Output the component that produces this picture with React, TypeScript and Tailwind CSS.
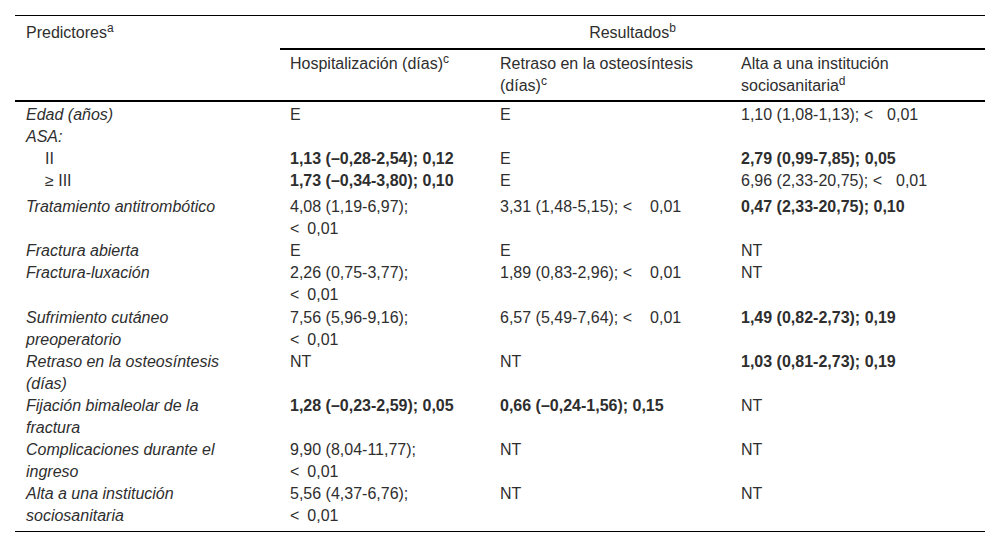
import type { ReactNode } from "react";

function Lt({ gap }: { gap: "c2" | "c3" | "c4" }) {
  const w = gap === "c2" ? "w-[8px]" : gap === "c3" ? "w-[18px]" : "w-[14px]";
  return (
    <>
      {"<"}
      <span className={`inline-block ${w}`} />
      0,01
    </>
  );
}

const B = ({ children }: { children: ReactNode }) => <span className="font-bold">{children}</span>;

type Row = { label: ReactNode; c2: ReactNode; c3: ReactNode; c4: ReactNode; pad?: string };

const rows: Row[] = [
  { label: "Edad (años)", c2: "E", c3: "E", c4: <>1,10 (1,08-1,13); <Lt gap="c4" /></>, pad: "pt-[2px]" },
  { label: "ASA:", c2: "", c3: "", c4: "" },
  {
    label: <span className="not-italic pl-[19px]">II</span>,
    c2: <B>1,13 (–0,28-2,54); 0,12</B>,
    c3: "E",
    c4: <B>2,79 (0,99-7,85); 0,05</B>,
  },
  {
    label: <span className="not-italic pl-[19px]">≥ III</span>,
    c2: <B>1,73 (–0,34-3,80); 0,10</B>,
    c3: "E",
    c4: <>6,96 (2,33-20,75); <Lt gap="c4" /></>,
  },
  {
    label: "Tratamiento antitrombótico",
    c2: <>4,08 (1,19-6,97);<br /><Lt gap="c2" /></>,
    c3: <>3,31 (1,48-5,15); <Lt gap="c3" /></>,
    c4: <B>0,47 (2,33-20,75); 0,10</B>,
    pad: "pt-[4px]",
  },
  { label: "Fractura abierta", c2: "E", c3: "E", c4: "NT" },
  {
    label: "Fractura-luxación",
    c2: <>2,26 (0,75-3,77);<br /><Lt gap="c2" /></>,
    c3: <>1,89 (0,83-2,96); <Lt gap="c3" /></>,
    c4: "NT",
  },
  {
    label: <>Sufrimiento cutáneo<br />preoperatorio</>,
    c2: <>7,56 (5,96-9,16);<br /><Lt gap="c2" /></>,
    c3: <>6,57 (5,49-7,64); <Lt gap="c3" /></>,
    c4: <B>1,49 (0,82-2,73); 0,19</B>,
    pad: "pt-[1px]",
  },
  {
    label: <>Retraso en la osteosíntesis<br />(días)</>,
    c2: "NT",
    c3: "NT",
    c4: <B>1,03 (0,81-2,73); 0,19</B>,
  },
  {
    label: <>Fijación bimaleolar de la<br />fractura</>,
    c2: <B>1,28 (–0,23-2,59); 0,05</B>,
    c3: <B>0,66 (–0,24-1,56); 0,15</B>,
    c4: "NT",
  },
  {
    label: <>Complicaciones durante el<br />ingreso</>,
    c2: <>9,90 (8,04-11,77);<br /><Lt gap="c2" /></>,
    c3: "NT",
    c4: "NT",
  },
  {
    label: <>Alta a una institución<br />sociosanitaria</>,
    c2: <>5,56 (4,37-6,76);<br /><Lt gap="c2" /></>,
    c3: "NT",
    c4: "NT",
    pad: "pb-[4px]",
  },
];

export default function App() {
  return (
    <div className="w-[1000px] h-[547px] bg-white pt-[15px] pl-[15px] font-[family-name:Liberation_Sans,Arial,sans-serif] text-[16px] text-[#2e2e2e]">
      <table className="w-[970px] table-fixed border-separate border-spacing-0 border-t border-b border-black leading-[22px]">
        <colgroup>
          <col className="w-[265px]" />
          <col className="w-[210px]" />
          <col className="w-[241px]" />
          <col className="w-[254px]" />
        </colgroup>
        <thead>
          <tr>
            <th
              rowSpan={2}
              className="align-top text-left font-normal pl-[11px] pt-[6px] border-b-2 border-black"
            >
              Predictores<sup>a</sup>
            </th>
            <th
              colSpan={3}
              className="text-center font-normal pt-[6px] pb-[4px] border-b-2 border-black"
            >
              Resultados<sup>b</sup>
            </th>
          </tr>
          <tr>
            <th className="align-top text-left font-normal pl-[10px] pt-[3px] pb-[3px] border-b-2 border-black">
              Hospitalización (días)<sup>c</sup>
            </th>
            <th className="align-top text-left font-normal pl-[10px] pt-[3px] pb-[3px] border-b-2 border-black">
              Retraso en la osteosíntesis
              <br />
              (días)<sup>c</sup>
            </th>
            <th className="align-top text-left font-normal pl-[10px] pt-[3px] pb-[3px] border-b-2 border-black">
              Alta a una institución
              <br />
              sociosanitaria<sup>d</sup>
            </th>
          </tr>
        </thead>
        <tbody>
          {rows.map((r, i) => (
            <tr key={i}>
              <td className={`align-top italic pl-[11px] ${r.pad ?? ""}`}>{r.label}</td>
              <td className={`align-top pl-[10px] ${r.pad ?? ""}`}>{r.c2}</td>
              <td className={`align-top pl-[10px] ${r.pad ?? ""}`}>{r.c3}</td>
              <td className={`align-top pl-[10px] ${r.pad ?? ""}`}>{r.c4}</td>
            </tr>
          ))}
        </tbody>
      </table>
    </div>
  );
}
